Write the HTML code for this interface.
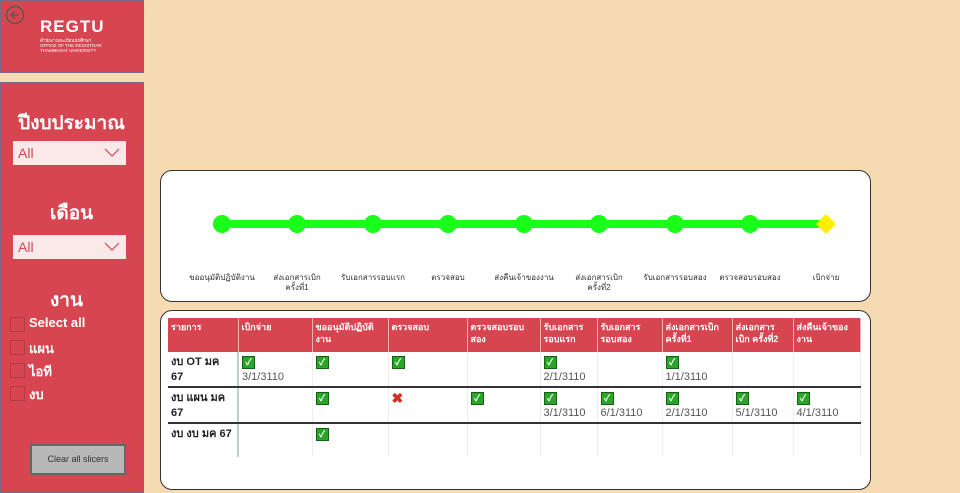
<!DOCTYPE html><html><head><meta charset="utf-8"><style>
body{margin:0;width:960px;height:493px;background:#f5dab2;position:relative;overflow:hidden;font-family:"Liberation Sans","Noto Sans CJK SC",sans-serif}
.a{position:absolute}
.red{background:#d64550;border:1px solid #7a6a8a;box-sizing:border-box}
.dd{position:absolute;left:13px;width:113px;height:24px;background:#fbe9ea;color:#d64550;font-size:14px;line-height:24px;padding-left:5px;box-sizing:border-box}
.dd svg{position:absolute;right:6px;top:6px}
.h{position:absolute;color:#fff;font-weight:bold;font-size:19px;width:143px;text-align:center}
.cb{position:absolute;left:10px;width:13px;height:13px;border:1px solid #b23a45}
.cl{position:absolute;left:29px;color:#fff;font-weight:bold;font-size:13px}
.card{position:absolute;background:#fff;border:1px solid #333;border-radius:12px}
.lbl{position:absolute;font-size:8px;color:#333;text-align:center;width:56px;line-height:10px}
table{position:absolute;left:168px;top:318px;border-collapse:collapse;font-size:11px;table-layout:fixed}
th{background:#d64550;color:#fff;font-size:9px;text-align:left;vertical-align:top;padding:3px 3px;height:34px;border-right:1px solid #f0b0b5;font-weight:bold;line-height:12px;box-sizing:border-box}
td{vertical-align:top;padding:3px 3px 1px;height:29px;border-right:1px solid #eee;color:#555;line-height:15px}
td:first-child{color:#222;font-weight:bold;border-right:2px solid #bcd}
tr.b td{border-bottom:2px solid #333}
.k{display:inline-block;width:11px;height:11px;background:#2aa52a;border:1px solid #156015;color:#fff;font-size:9px;line-height:11px;text-align:center;font-weight:bold}
</style></head><body>
<div class="a red" style="left:0;top:0;width:144px;height:73px">
<svg class="a" style="left:4px;top:4px" width="20" height="20"><circle cx="10" cy="10" r="8.5" fill="none" stroke="#555" stroke-width="1.3"/><path d="M14 10H6M9.5 6.5L6 10l3.5 3.5" fill="none" stroke="#555" stroke-width="1.3"/></svg>
<div class="a" style="left:39px;top:16px;color:#fff;font-weight:bold;font-size:17px;letter-spacing:1px">REGTU</div>
<div class="a" style="left:39px;top:37px;color:#fff;font-size:4.5px;line-height:5px">สำนักงานทะเบียนนักศึกษา<br>OFFICE OF THE REGISTRAR<br>THAMMASAT UNIVERSITY</div>
</div>
<div class="a red" style="left:0;top:82px;width:144px;height:411px"></div>
<div class="h" style="top:108px">ปีงบประมาณ</div>
<div class="dd" style="top:141px">All<svg width="16" height="10"><path d="M1 2l7 7 7-7" fill="none" stroke="#d64550" stroke-width="1.2"/></svg></div>
<div class="h" style="top:198px">เดือน</div>
<div class="dd" style="top:235px">All<svg width="16" height="10"><path d="M1 2l7 7 7-7" fill="none" stroke="#d64550" stroke-width="1.2"/></svg></div>
<div class="h" style="top:285px;left:-5px">งาน</div>
<div class="cb" style="top:317px"></div><div class="cl" style="top:315px">Select all</div>
<div class="cb" style="top:340px"></div><div class="cl" style="top:338px">แผน</div>
<div class="cb" style="top:363px"></div><div class="cl" style="top:361px">ไอที</div>
<div class="cb" style="top:386px"></div><div class="cl" style="top:384px">งบ</div>
<div class="a" style="left:30px;top:444px;width:96px;height:31px;background:#b8b8b8;border:2px solid #666;box-sizing:border-box;font-size:9px;color:#333;text-align:center;line-height:27px">Clear all slicers</div>

<div class="card" style="left:160px;top:170px;width:709px;height:130px"></div>
<svg class="a" style="left:160px;top:170px" width="710" height="130">
<line x1="62" y1="54" x2="666" y2="54" stroke="#1aff1a" stroke-width="8"/>
<g fill="#1aff1a"><circle cx="62" cy="54" r="9"/><circle cx="137" cy="54" r="9"/><circle cx="213" cy="54" r="9"/><circle cx="288" cy="54" r="9"/><circle cx="364" cy="54" r="9"/><circle cx="439" cy="54" r="9"/><circle cx="515" cy="54" r="9"/><circle cx="590" cy="54" r="9"/></g>
<path d="M666 44l10 10-10 10-10-10z" fill="#ffee00"/>
</svg>
<div class="lbl" style="left:185px;top:273px;width:74px">ขออนุมัติปฏิบัติงาน</div>
<div class="lbl" style="left:269px;top:273px">ส่งเอกสารเบิก ครั้งที่1</div>
<div class="lbl" style="left:336px;top:273px;width:74px">รับเอกสารรอบแรก</div>
<div class="lbl" style="left:411px;top:273px;width:74px">ตรวจสอบ</div>
<div class="lbl" style="left:487px;top:273px;width:74px">ส่งคืนเจ้าของงาน</div>
<div class="lbl" style="left:571px;top:273px">ส่งเอกสารเบิก ครั้งที่2</div>
<div class="lbl" style="left:638px;top:273px;width:74px">รับเอกสารรอบสอง</div>
<div class="lbl" style="left:713px;top:273px;width:74px">ตรวจสอบรอบสอง</div>
<div class="lbl" style="left:789px;top:273px;width:74px">เบิกจ่าย</div>

<div class="card" style="left:160px;top:310px;width:709px;height:178px"></div>
<table style="width:692px">
<col style="width:70px"><col style="width:74px"><col style="width:76px"><col style="width:79px"><col style="width:73px"><col style="width:57px"><col style="width:65px"><col style="width:70px"><col style="width:61px"><col style="width:67px">
<tr><th>รายการ</th><th>เบิกจ่าย</th><th>ขออนุมัติปฏิบัติ งาน</th><th>ตรวจสอบ</th><th>ตรวจสอบรอบ สอง</th><th>รับเอกสาร รอบแรก</th><th>รับเอกสาร รอบสอง</th><th>ส่งเอกสารเบิก ครั้งที่1</th><th>ส่งเอกสาร เบิก ครั้งที่2</th><th>ส่งคืนเจ้าของ งาน</th></tr>
<tr class="b"><td>งบ OT มค 67</td><td><span class="k">✓</span><br>3/1/3110</td><td><span class="k">✓</span></td><td><span class="k">✓</span></td><td></td><td><span class="k">✓</span><br>2/1/3110</td><td></td><td><span class="k">✓</span><br>1/1/3110</td><td></td><td></td></tr>
<tr class="b"><td>งบ แผน มค 67</td><td></td><td><span class="k">✓</span></td><td><span style="color:#d03020;font-weight:bold;font-size:14px">✖</span></td><td><span class="k">✓</span></td><td><span class="k">✓</span><br>3/1/3110</td><td><span class="k">✓</span><br>6/1/3110</td><td><span class="k">✓</span><br>2/1/3110</td><td><span class="k">✓</span><br>5/1/3110</td><td><span class="k">✓</span><br>4/1/3110</td></tr>
<tr><td style="height:14px">งบ งบ มค 67</td><td></td><td><span class="k">✓</span></td><td></td><td></td><td></td><td></td><td></td><td></td><td></td></tr>
</table>
</body></html>
